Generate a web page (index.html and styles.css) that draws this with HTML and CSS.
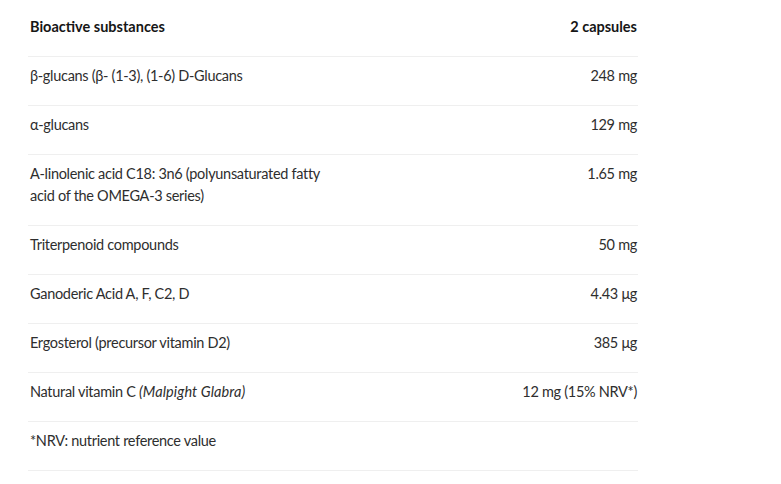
FILE: index.html
```html
<!DOCTYPE html>
<html>
<head>
<meta charset="utf-8">
<link rel="stylesheet" href="styles.css">
</head>
<body>
<div class="table">
  <div class="row head">
    <div class="name">Bioactive substances</div>
    <div class="val">2 capsules</div>
  </div>
  <div class="row">
    <div class="name">β-glucans (β- (1-3), (1-6) D-Glucans</div>
    <div class="val">248 mg</div>
  </div>
  <div class="row">
    <div class="name">α-glucans</div>
    <div class="val">129 mg</div>
  </div>
  <div class="row">
    <div class="name">A-linolenic acid C18: 3n6 (polyunsaturated fatty acid of the OMEGA-3 series)</div>
    <div class="val">1.65 mg</div>
  </div>
  <div class="row">
    <div class="name">Triterpenoid compounds</div>
    <div class="val">50 mg</div>
  </div>
  <div class="row">
    <div class="name">Ganoderic Acid A, F, C2, D</div>
    <div class="val">4.43 μg</div>
  </div>
  <div class="row">
    <div class="name">Ergosterol (precursor vitamin D2)</div>
    <div class="val">385 μg</div>
  </div>
  <div class="row">
    <div class="name">Natural vitamin C <em>(Malpight Glabra)</em></div>
    <div class="val">12 mg (15% NRV*)</div>
  </div>
  <div class="row">
    <div class="name">*NRV: nutrient reference value</div>
    <div class="val"></div>
  </div>
</div>
</body>
</html>
```
FILE: styles.css
```css
body {
  margin: 8px;
  background: #fff;
  font-family: Lato, "Liberation Sans", sans-serif;
  font-size: 14.5px;
  line-height: 22px;
  color: #2e2e2e;
  letter-spacing: -0.3px;
}
.table {
  width: 610px;
  margin-left: 20px;
}
.row {
  display: flex;
  justify-content: space-between;
  align-items: flex-start;
  padding: 8px 1px 18px 2px;
  border-bottom: 1px solid #efefef;
}
.name {
  width: 300px;
}
.val {
  text-align: right;
}
.head {
  font-weight: 700;
  color: #161616;
  letter-spacing: 0;
}
em {
  font-style: italic;
  letter-spacing: 0.1px;
}
```
